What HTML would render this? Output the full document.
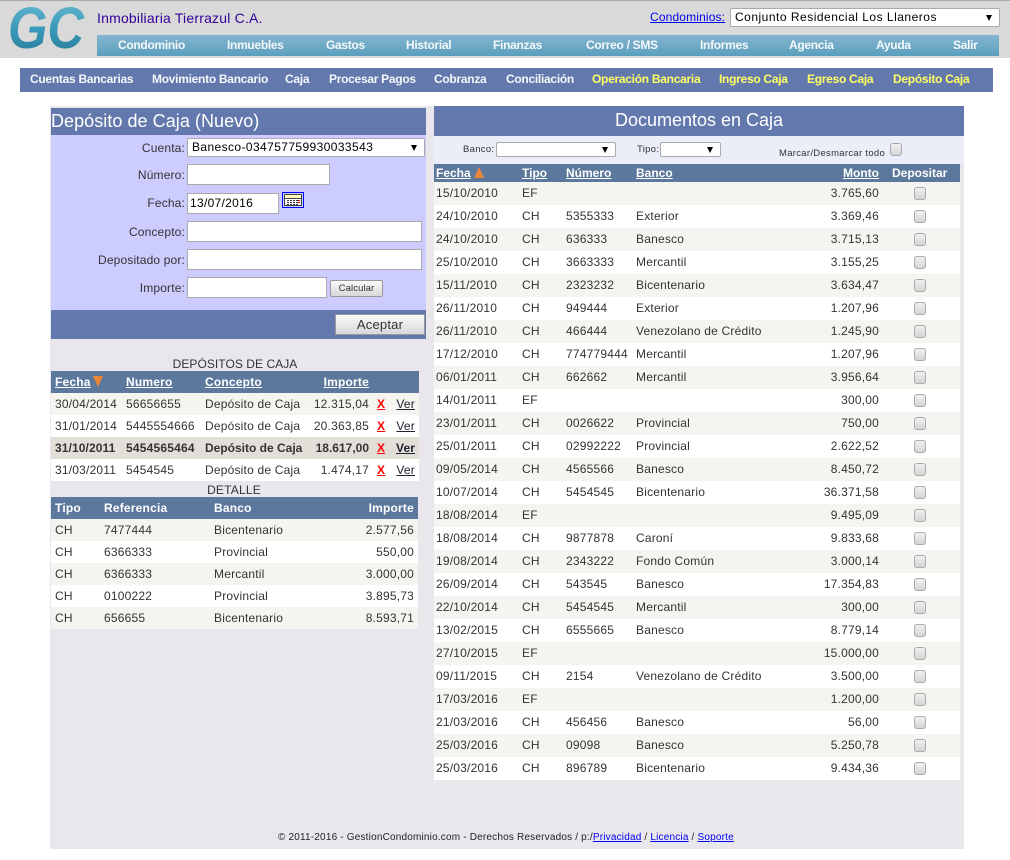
<!DOCTYPE html>
<html lang="es"><head><meta charset="utf-8"><title>Depósito de Caja</title>
<style>
*{box-sizing:border-box}
html,body{margin:0;padding:0;background:#fff}
body{width:1010px;height:860px;position:relative;overflow:hidden;font:12px "Liberation Sans",Arial,sans-serif;color:#333}
.a{position:absolute;white-space:nowrap}
#top{left:0;top:0;width:1010px;height:58px;background:#d9d9d9;border-top:1px solid #aaa}
#nav{left:97px;top:35px;width:902px;height:21px;background:linear-gradient(#85b5d0,#5a9fbd)}
#nav span,#sub span{position:absolute;top:0;color:#f4f8fa;font-weight:bold;white-space:nowrap}
#nav span{line-height:20px;letter-spacing:-.3px}
#sub{left:20px;top:68px;width:973px;height:24px;background:#6378ac}
#sub span{line-height:22px;letter-spacing:-.28px}
#sub span.y{color:#ffff66}
#main{left:50px;top:106px;width:914px;height:743px;background:#e9e7ec}
.sel{background:#fff;border:1px solid #aaa;border-radius:2px;color:#000}
.sel:after{content:"";position:absolute;right:7px;top:50%;margin-top:-3px;border:3px solid transparent;border-top:6px solid #000;border-bottom:0}
.in{background:#fff;border:1px solid #aaa;color:#000;padding-left:2px}
.lb{right:825px;color:#333;letter-spacing:.15px}
.tt{color:#fff}
.row{position:absolute;height:23px;left:434px;width:526px;line-height:22px;letter-spacing:.2px}
.row span{position:absolute;white-space:nowrap}
.t{background:#f5f4f0}.w{background:#fff}
.c1{left:2px}.c2{left:88px}.c3{left:132px}.c4{left:202px}.c5{right:81px}
.cb{position:absolute;left:480px;top:5px;width:12px;height:13px;border:1px solid #aaa;border-radius:3px;background:linear-gradient(#f0f0f0,#d4d4d4)}
.hd{background:#5c789c;color:#fff;font-weight:bold;letter-spacing:0}
.hd u,.hd span{color:#fff}
.l{position:absolute;left:51px;width:368px;height:22px;line-height:22px;letter-spacing:.2px}
.l span{position:absolute;white-space:nowrap}
.d1{left:4px}.d2{left:75px}.d3{left:154px}.d4{right:50px}.d5{left:326px;color:#f00;font-weight:bold;text-decoration:underline}.d6{right:4px;color:#223;text-decoration:underline}
.e1{left:4px}.e2{left:53px}.e3{left:163px}.e4{right:4px}
.b{font-weight:bold;background:#e2dfd8}
.btn{background:linear-gradient(#fafafa,#d8d8d8);border:1px solid #999;color:#333;text-align:center}
a{color:#00e}
</style></head><body>
<div class="a" id="top"></div>
<svg class="a" style="left:0;top:0" width="96" height="56"><defs><linearGradient id="g" x1="0" y1="0" x2="0" y2="1"><stop offset="0" stop-color="#6fbcd2"/><stop offset=".5" stop-color="#3a9aba"/><stop offset="1" stop-color="#277693"/></linearGradient></defs><text x="8" y="48" font-family="Liberation Sans" font-style="italic" font-weight="bold" font-size="58" textLength="76" lengthAdjust="spacingAndGlyphs" fill="url(#g)">GC</text></svg>
<div class="a" style="left:97px;top:10px;font-size:14px;color:#330099;letter-spacing:.2px">Inmobiliaria Tierrazul C.A.</div>
<div class="a" style="left:650px;top:10px;letter-spacing:.15px"><a href="#">Condominios:</a></div>
<div class="a sel" style="left:730px;top:8px;width:270px;height:19px;font-size:12px;line-height:17px;padding-left:4px;letter-spacing:.5px">Conjunto Residencial Los Llaneros</div>
<div class="a" id="nav"><span style="left:21px">Condominio</span><span style="left:130px">Inmuebles</span><span style="left:229px">Gastos</span><span style="left:309px">Historial</span><span style="left:396px">Finanzas</span><span style="left:489px">Correo / SMS</span><span style="left:603px">Informes</span><span style="left:692px">Agencia</span><span style="left:779px">Ayuda</span><span style="left:856px">Salir</span></div>
<div class="a" id="sub"><span style="left:10px">Cuentas Bancarias</span><span style="left:132px">Movimiento Bancario</span><span style="left:265px">Caja</span><span style="left:309px">Procesar Pagos</span><span style="left:414px">Cobranza</span><span style="left:486px">Conciliación</span><span class="y" style="left:572px">Operación Bancaria</span><span class="y" style="left:699px">Ingreso Caja</span><span class="y" style="left:787px">Egreso Caja</span><span class="y" style="left:873px">Depósito Caja</span></div>
<div class="a" id="main"></div>

<div class="a tt" style="left:51px;top:108px;width:375px;height:27px;background:#6378ac;font-size:18px;line-height:26px;letter-spacing:.05px">Depósito de Caja (Nuevo)</div>
<div class="a" style="left:51px;top:135px;width:375px;height:175px;background:#ccccff"></div>
<div class="a" style="left:51px;top:310px;width:375px;height:29px;background:#6378ac"></div>
<div class="a lb" style="top:141px">Cuenta:</div>
<div class="a sel" style="left:187px;top:138px;width:238px;height:19px;line-height:17px;padding-left:4px;letter-spacing:.4px">Banesco-034757759930033543</div>
<div class="a lb" style="top:168px">Número:</div><div class="a in" style="left:187px;top:164px;width:143px;height:21px"></div>
<div class="a lb" style="top:196px">Fecha:</div><div class="a in" style="left:187px;top:193px;width:92px;height:21px;line-height:19px;letter-spacing:.3px">13/07/2016</div>
<svg class="a" style="left:282px;top:192px" width="22" height="16"><rect x=".5" y=".5" width="21" height="15" fill="#ccf" stroke="#00f"/><rect x="2.5" y="2.5" width="17" height="11" fill="#fff" stroke="#444"/><rect x="3" y="3" width="16" height="3" fill="#ffffb8"/><path d="M3 6.500h16" stroke="#444"/><path d="M5 8.500h11M5 10.500h11M5 12.500h11" stroke="#334" stroke-dasharray="2 1"/><path d="M16 8.500h2M16 10.500h2" stroke="#d00"/></svg>
<div class="a lb" style="top:225px">Concepto:</div><div class="a in" style="left:187px;top:221px;width:235px;height:21px"></div>
<div class="a lb" style="top:253px">Depositado por:</div><div class="a in" style="left:187px;top:249px;width:235px;height:21px"></div>
<div class="a lb" style="top:281px">Importe:</div><div class="a in" style="left:187px;top:277px;width:140px;height:21px"></div>
<div class="a btn" style="left:330px;top:280px;width:53px;height:17px;font-size:9.5px;line-height:15px;letter-spacing:.1px;border-radius:2px">Calcular</div>
<div class="a btn" style="left:335px;top:314px;width:90px;height:21px;font-size:13px;line-height:19px;letter-spacing:.2px">Aceptar</div>

<div class="a" style="left:51px;top:357px;width:368px;text-align:center;letter-spacing:.05px">DEPÓSITOS DE CAJA</div>
<div class="l hd" style="top:371px"><span class="d1"><u>Fecha</u></span><svg style="position:absolute;left:42px;top:5px" width="10" height="11"><path d="M0 0H10L5 11Z" fill="#e9863a"/></svg><span class="d2"><u>Numero</u></span><span class="d3"><u>Concepto</u></span><span class="d4"><u>Importe</u></span></div>
<div class="l t" style="top:393px"><span class="d1">30/04/2014</span><span class="d2">56656655</span><span class="d3">Depósito de Caja</span><span class="d4">12.315,04</span><span class="d5">X</span><span class="d6">Ver</span></div>
<div class="l w" style="top:415px"><span class="d1">31/01/2014</span><span class="d2">5445554666</span><span class="d3">Depósito de Caja</span><span class="d4">20.363,85</span><span class="d5">X</span><span class="d6">Ver</span></div>
<div class="l b" style="top:437px;letter-spacing:.1px"><span class="d1">31/10/2011</span><span class="d2" style="letter-spacing:.2px">5454565464</span><span class="d3" style="letter-spacing:0">Depósito de Caja</span><span class="d4" style="letter-spacing:0">18.617,00</span><span class="d5">X</span><span class="d6">Ver</span></div>
<div class="l w" style="top:459px"><span class="d1">31/03/2011</span><span class="d2">5454545</span><span class="d3">Depósito de Caja</span><span class="d4">1.474,17</span><span class="d5">X</span><span class="d6">Ver</span></div>
<div class="a" style="left:51px;top:483px;width:366px;text-align:center;letter-spacing:.2px">DETALLE</div>
<div class="l hd" style="top:497px;width:367px"><span class="e1">Tipo</span><span class="e2">Referencia</span><span class="e3">Banco</span><span class="e4">Importe</span></div>
<div class="l t" style="top:519px;width:367px"><span class="e1">CH</span><span class="e2">7477444</span><span class="e3">Bicentenario</span><span class="e4">2.577,56</span></div>
<div class="l w" style="top:541px;width:367px"><span class="e1">CH</span><span class="e2">6366333</span><span class="e3">Provincial</span><span class="e4">550,00</span></div>
<div class="l t" style="top:563px;width:367px"><span class="e1">CH</span><span class="e2">6366333</span><span class="e3">Mercantil</span><span class="e4">3.000,00</span></div>
<div class="l w" style="top:585px;width:367px"><span class="e1">CH</span><span class="e2">0100222</span><span class="e3">Provincial</span><span class="e4">3.895,73</span></div>
<div class="l t" style="top:607px;width:367px"><span class="e1">CH</span><span class="e2">656655</span><span class="e3">Bicentenario</span><span class="e4">8.593,71</span></div>

<div class="a tt" style="left:434px;top:106px;width:530px;height:30px;background:#6378ac;font-size:18px;line-height:28px;text-align:center;letter-spacing:0">Documentos en Caja</div>
<div class="a" style="left:434px;top:136px;width:530px;height:28px;background:#ebeef9"></div>
<div class="a" style="left:463px;top:144px;font-size:9.5px;letter-spacing:.3px">Banco:</div>
<div class="a sel" style="left:496px;top:142px;width:120px;height:15px"></div>
<div class="a" style="left:637px;top:144px;font-size:9.5px;letter-spacing:.3px">Tipo:</div>
<div class="a sel" style="left:660px;top:142px;width:61px;height:15px"></div>
<div class="a" style="left:779px;top:148px;font-size:9.5px;letter-spacing:.3px">Marcar/Desmarcar todo</div>
<div class="cb" style="left:890px;top:143px"></div>

<div class="row hd" style="top:164px;height:18px;line-height:18px"><span class="c1"><u>Fecha</u></span><svg style="position:absolute;left:40px;top:3px" width="10" height="11"><path d="M5 0L10 11H0Z" fill="#e9863a"/></svg><span class="c2"><u>Tipo</u></span><span class="c3"><u>Número</u></span><span class="c4"><u>Banco</u></span><span class="c5"><u>Monto</u></span><span style="left:458px">Depositar</span></div>
<div class="row t" style="top:182px"><span class="c1">15/10/2010</span><span class="c2">EF</span><span class="c5">3.765,60</span><i class="cb"></i></div>
<div class="row w" style="top:205px"><span class="c1">24/10/2010</span><span class="c2">CH</span><span class="c3">5355333</span><span class="c4">Exterior</span><span class="c5">3.369,46</span><i class="cb"></i></div>
<div class="row t" style="top:228px"><span class="c1">24/10/2010</span><span class="c2">CH</span><span class="c3">636333</span><span class="c4">Banesco</span><span class="c5">3.715,13</span><i class="cb"></i></div>
<div class="row w" style="top:251px"><span class="c1">25/10/2010</span><span class="c2">CH</span><span class="c3">3663333</span><span class="c4">Mercantil</span><span class="c5">3.155,25</span><i class="cb"></i></div>
<div class="row t" style="top:274px"><span class="c1">15/11/2010</span><span class="c2">CH</span><span class="c3">2323232</span><span class="c4">Bicentenario</span><span class="c5">3.634,47</span><i class="cb"></i></div>
<div class="row w" style="top:297px"><span class="c1">26/11/2010</span><span class="c2">CH</span><span class="c3">949444</span><span class="c4">Exterior</span><span class="c5">1.207,96</span><i class="cb"></i></div>
<div class="row t" style="top:320px"><span class="c1">26/11/2010</span><span class="c2">CH</span><span class="c3">466444</span><span class="c4">Venezolano de Crédito</span><span class="c5">1.245,90</span><i class="cb"></i></div>
<div class="row w" style="top:343px"><span class="c1">17/12/2010</span><span class="c2">CH</span><span class="c3">774779444</span><span class="c4">Mercantil</span><span class="c5">1.207,96</span><i class="cb"></i></div>
<div class="row t" style="top:366px"><span class="c1">06/01/2011</span><span class="c2">CH</span><span class="c3">662662</span><span class="c4">Mercantil</span><span class="c5">3.956,64</span><i class="cb"></i></div>
<div class="row w" style="top:389px"><span class="c1">14/01/2011</span><span class="c2">EF</span><span class="c5">300,00</span><i class="cb"></i></div>
<div class="row t" style="top:412px"><span class="c1">23/01/2011</span><span class="c2">CH</span><span class="c3">0026622</span><span class="c4">Provincial</span><span class="c5">750,00</span><i class="cb"></i></div>
<div class="row w" style="top:435px"><span class="c1">25/01/2011</span><span class="c2">CH</span><span class="c3">02992222</span><span class="c4">Provincial</span><span class="c5">2.622,52</span><i class="cb"></i></div>
<div class="row t" style="top:458px"><span class="c1">09/05/2014</span><span class="c2">CH</span><span class="c3">4565566</span><span class="c4">Banesco</span><span class="c5">8.450,72</span><i class="cb"></i></div>
<div class="row w" style="top:481px"><span class="c1">10/07/2014</span><span class="c2">CH</span><span class="c3">5454545</span><span class="c4">Bicentenario</span><span class="c5">36.371,58</span><i class="cb"></i></div>
<div class="row t" style="top:504px"><span class="c1">18/08/2014</span><span class="c2">EF</span><span class="c5">9.495,09</span><i class="cb"></i></div>
<div class="row w" style="top:527px"><span class="c1">18/08/2014</span><span class="c2">CH</span><span class="c3">9877878</span><span class="c4">Caroní</span><span class="c5">9.833,68</span><i class="cb"></i></div>
<div class="row t" style="top:550px"><span class="c1">19/08/2014</span><span class="c2">CH</span><span class="c3">2343222</span><span class="c4">Fondo Común</span><span class="c5">3.000,14</span><i class="cb"></i></div>
<div class="row w" style="top:573px"><span class="c1">26/09/2014</span><span class="c2">CH</span><span class="c3">543545</span><span class="c4">Banesco</span><span class="c5">17.354,83</span><i class="cb"></i></div>
<div class="row t" style="top:596px"><span class="c1">22/10/2014</span><span class="c2">CH</span><span class="c3">5454545</span><span class="c4">Mercantil</span><span class="c5">300,00</span><i class="cb"></i></div>
<div class="row w" style="top:619px"><span class="c1">13/02/2015</span><span class="c2">CH</span><span class="c3">6555665</span><span class="c4">Banesco</span><span class="c5">8.779,14</span><i class="cb"></i></div>
<div class="row t" style="top:642px"><span class="c1">27/10/2015</span><span class="c2">EF</span><span class="c5">15.000,00</span><i class="cb"></i></div>
<div class="row w" style="top:665px"><span class="c1">09/11/2015</span><span class="c2">CH</span><span class="c3">2154</span><span class="c4">Venezolano de Crédito</span><span class="c5">3.500,00</span><i class="cb"></i></div>
<div class="row t" style="top:688px"><span class="c1">17/03/2016</span><span class="c2">EF</span><span class="c5">1.200,00</span><i class="cb"></i></div>
<div class="row w" style="top:711px"><span class="c1">21/03/2016</span><span class="c2">CH</span><span class="c3">456456</span><span class="c4">Banesco</span><span class="c5">56,00</span><i class="cb"></i></div>
<div class="row t" style="top:734px"><span class="c1">25/03/2016</span><span class="c2">CH</span><span class="c3">09098</span><span class="c4">Banesco</span><span class="c5">5.250,78</span><i class="cb"></i></div>
<div class="row w" style="top:757px"><span class="c1">25/03/2016</span><span class="c2">CH</span><span class="c3">896789</span><span class="c4">Bicentenario</span><span class="c5">9.434,36</span><i class="cb"></i></div>

<div class="a" style="left:278px;top:832px;font-size:10px;letter-spacing:.19px;color:#222">© 2011-2016 - GestionCondominio.com - Derechos Reservados / p:/<a href="#">Privacidad</a> / <a href="#">Licencia</a> / <a href="#">Soporte</a></div>
</body></html>
